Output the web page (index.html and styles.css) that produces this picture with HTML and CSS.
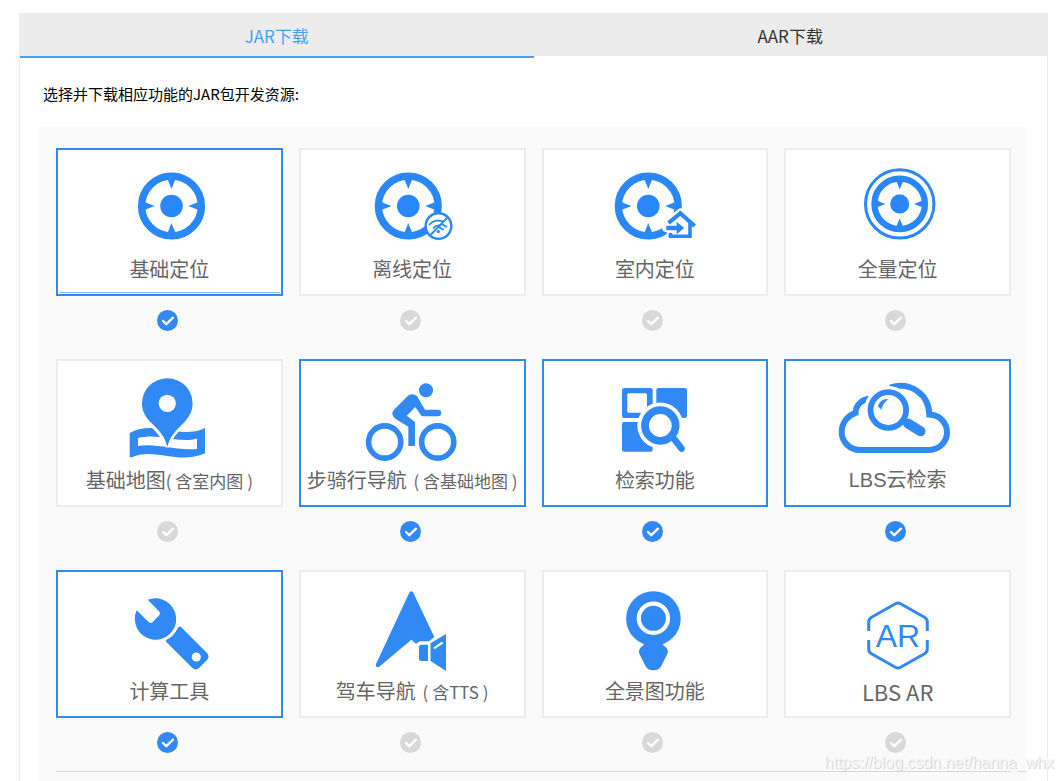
FILE: index.html
```html
<!DOCTYPE html>
<html lang="zh-CN">
<head>
<meta charset="utf-8">
<meta name="viewport" content="width=device-width, initial-scale=1">
<title>JAR下载</title>
<link rel="stylesheet" href="styles.css">
</head>
<body>
<svg class="defs" aria-hidden="true">
  <defs>
    <g id="target">
      <circle r="29.9" fill="none" stroke="currentColor" stroke-width="7.4"/>
      <circle r="11.3" fill="currentColor"/>
      <path fill="currentColor" d="M-4-27H4L0-16.9ZM-4 27H4L0 16.9ZM-27-4V4L-16.9 0ZM27-4V4L16.9 0Z"/>
    </g>
  </defs>
</svg>
<main class="download">
  <div class="tabs" role="tablist">
    <button class="tab tab-active" type="button" role="tab" aria-selected="true">JAR下载</button>
    <button class="tab" type="button" role="tab" aria-selected="false">AAR下载</button>
  </div>
  <p class="intro">选择并下载相应功能的JAR包开发资源:</p>
  <form class="panel">
    <div class="grid">
      <label class="item">
        <span class="card card-lined">
          <svg class="art art-bright" viewBox="0 0 121 100" aria-hidden="true"><use href="#target" x="62.5" y="49"/></svg>
          <span class="title">基础定位</span>
        </span>
        <input class="check" type="checkbox" checked>
      </label>
      <label class="item">
        <span class="card">
          <svg class="art art-bright" viewBox="0 0 121 100" aria-hidden="true">
            <use href="#target" x="56.3" y="49"/>
            <circle cx="86.5" cy="69" r="12.8" fill="#fff" stroke="currentColor" stroke-width="2.4"/>
            <g fill="none" stroke="currentColor" stroke-width="1.8" stroke-linecap="round">
              <path d="M77.5 67.5C80.5 63.8 86 62.8 90.5 64.3M81.5 71C83.5 68.6 86.5 68 88.5 68.6"/>
              <path d="M78 78.5L95 61M90.5 67.5L94.5 69.8M87.5 70.5L91 72.5"/>
            </g>
            <circle cx="86.4" cy="74.6" r="1.6" fill="currentColor"/>
          </svg>
          <span class="title">离线定位</span>
        </span>
        <input class="check" type="checkbox">
      </label>
      <label class="item">
        <span class="card">
          <svg class="art art-bright" viewBox="0 0 121 100" aria-hidden="true">
            <use href="#target" x="54.3" y="49"/>
            <path d="M73 67L86.3 55.5L101 69M96 66V79.3H76.5V77M72.3 71H86" fill="none" stroke="#fff" stroke-width="8" stroke-linejoin="round" stroke-linecap="round"/>
            <path fill="#fff" d="M77 67L86.3 58L96 67V80H77Z"/>
            <path d="M74.5 66L86.3 56.2L100.6 69" fill="none" stroke="currentColor" stroke-width="4.2"/>
            <path d="M96 66V79.3H76.5V76" fill="none" stroke="currentColor" stroke-width="3.6"/>
            <path fill="currentColor" d="M72.3 68.8H82.7V64.8L90.2 71L82.7 77.2V73.2H72.3Z"/>
          </svg>
          <span class="title">室内定位</span>
        </span>
        <input class="check" type="checkbox">
      </label>
      <label class="item">
        <span class="card">
          <svg class="art art-bright" viewBox="0 0 121 100" aria-hidden="true">
            <circle cx="62.7" cy="46.9" r="34.2" fill="none" stroke="currentColor" stroke-width="3"/>
            <g transform="translate(62.7 46.9) scale(.845)"><use href="#target"/></g>
          </svg>
          <span class="title">全量定位</span>
        </span>
        <input class="check" type="checkbox">
      </label>

      <label class="item">
        <span class="card">
          <svg class="art" viewBox="0 0 121 100" aria-hidden="true">
            <path fill="currentColor" d="M20.7 65C34 58 46 60 58 62S84 66 96 60V85.3C84 91 70 90 58 88S34 84 22 89.5L20.7 89Z"/>
            <path fill="#fff" d="M29 70C38 68 48 68 58 70S80 73 88 70.7V81C76 82 66 80 58 79S38 76 29 78Z"/>
            <path fill="#fff" d="M42.3 59C48 65 55 73 57 79.5H60C62 73 66 67 74 59L60 40Z"/>
            <path fill="currentColor" d="M58.3 79C56.5 70 51 63 43.5 56C36.5 50 33 43 33 35.5A25.3 25.3 0 0 1 83.6 35.5C83.6 43 80 50 73.5 56C66 63 60.5 70 58.3 79Z"/>
            <circle cx="58.3" cy="35.3" r="8.6" fill="#fff"/>
          </svg>
          <span class="title">基础地图<small>( 含室内图 )</small></span>
        </span>
        <input class="check" type="checkbox">
      </label>
      <label class="item">
        <span class="card">
          <svg class="art" viewBox="0 0 121 100" aria-hidden="true">
            <g fill="none" stroke="currentColor" stroke-width="5.6"><circle cx="32.7" cy="74" r="16.1"/><circle cx="85.7" cy="74" r="16.1"/></g>
            <g fill="currentColor">
              <circle cx="74" cy="22.3" r="7"/>
              <path d="M56.3 27.5Q60.7 24.6 65 28L73 41.7H86A3.1 3.1 0 0 1 86 48.2H69.7L63.3 39L54.7 47.7L63 54V78H56.3V58.7L43 50.5Q38 46.5 42 41.8Z"/>
            </g>
          </svg>
          <span class="title title-wide">步骑行导航<small> ( 含基础地图 )</small></span>
        </span>
        <input class="check" type="checkbox" checked>
      </label>
      <label class="item">
        <span class="card">
          <svg class="art" viewBox="0 0 121 100" aria-hidden="true">
            <g fill="currentColor">
              <rect x="28" y="20" width="30.7" height="30" rx="2.3"/>
              <rect x="62.3" y="20" width="30.7" height="30" rx="2.3"/>
              <rect x="28" y="54" width="30.7" height="29.7" rx="2.3"/>
            </g>
            <rect x="33.3" y="25.3" width="19.7" height="19.4" rx="1.5" fill="#fff"/>
            <circle cx="66.3" cy="57.5" r="23" fill="#fff"/>
            <circle cx="66.3" cy="57.5" r="15.3" fill="none" stroke="currentColor" stroke-width="7.8"/>
            <path d="M79 69.5L87.5 80.6" fill="none" stroke="currentColor" stroke-width="6.6" stroke-linecap="round"/>
          </svg>
          <span class="title">检索功能</span>
        </span>
        <input class="check" type="checkbox" checked>
      </label>
      <label class="item">
        <span class="card">
          <svg class="art" viewBox="0 0 121 100" aria-hidden="true">
            <path d="M53 19.7C73 13 92 26 92.3 46.5C103 47 110 55 110 64.5C110 74 102 82 91 82H23C13 82 4.7 74 4.7 64C4.7 55 10.5 47.5 18.6 44.8C18.6 37 25 31 34 30.5" fill="none" stroke="currentColor" stroke-width="6"/>
            <circle cx="51.3" cy="42" r="24" fill="#fff"/>
            <circle cx="51.3" cy="42" r="17.8" fill="none" stroke="currentColor" stroke-width="5.8"/>
            <path d="M71 55.5L83.5 63.3" fill="none" stroke="currentColor" stroke-width="10" stroke-linecap="round"/>
            <path fill="currentColor" d="M41 38.5C42 33.5 46 30.5 51 31C48.5 34 46.5 35 44.5 41.5Z"/>
          </svg>
          <span class="title title-cloud">LBS云检索</span>
        </span>
        <input class="check" type="checkbox" checked>
      </label>

      <label class="item">
        <span class="card">
          <svg class="art" viewBox="0 0 121 100" aria-hidden="true">
            <path fill="currentColor" d="M38.7 20.8A20.7 20.7 0 1 1 27.7 31.3L39.8 43.2Q41.7 44.8 43.5 43.2L50.2 36.2Q51.8 34.2 50.2 32.4Z"/>
            <path fill="currentColor" fill-rule="evenodd" d="M69.3 48.2Q70.8 46.8 72.3 48.2L98 74Q101.2 77.5 98 81L90 89Q86.8 91.8 83.5 89L57.6 63.2Q56.2 61.6 57.8 60.6C63 58 66.5 54 69.3 48.2ZM87.3 73.5a4.5 4.5 0 1 0 .01 0Z"/>
          </svg>
          <span class="title">计算工具</span>
        </span>
        <input class="check" type="checkbox" checked>
      </label>
      <label class="item">
        <span class="card">
          <svg class="art" viewBox="0 0 121 100" aria-hidden="true">
            <g fill="currentColor">
              <path d="M57.4 13.6Q59.3 11 61.2 13.6L82.3 58L77 62.3H68L64 64.7L59.3 60.8L27.3 87.8Q23.2 89 24 85Z"/>
              <path d="M69.5 65.7H76V82H69.5Q67 82 67 79.5V68.2Q67 65.7 69.5 65.7ZM78.5 64.3L94 55V92L78.5 82Z"/>
            </g>
            <path d="M82 69.3L90.7 63.3" stroke="#fff" stroke-width="2.2"/>
          </svg>
          <span class="title title-wide">驾车导航<small> ( 含TTS )</small></span>
        </span>
        <input class="check" type="checkbox">
      </label>
      <label class="item">
        <span class="card">
          <svg class="art" viewBox="0 0 121 100" aria-hidden="true">
            <g fill="currentColor">
              <circle cx="59.4" cy="39.5" r="27.3"/>
              <path d="M48 62C51 63.5 51 65 48.5 67Q43.5 70.5 45.5 75L51.5 87Q53.5 91.2 59.4 91.2T67.3 87L73.3 75Q75.3 70.5 70.3 67C67.8 65 67.8 63.5 70.8 62Z"/>
            </g>
            <circle cx="59.4" cy="39.3" r="14.6" fill="none" stroke="#fff" stroke-width="4.2"/>
          </svg>
          <span class="title">全景图功能</span>
        </span>
        <input class="check" type="checkbox">
      </label>
      <label class="item">
        <span class="card">
          <svg class="art" viewBox="0 0 121 100" aria-hidden="true">
            <path d="M31.7 52V43Q31.7 39.8 34.5 38.2L58.4 24.8Q61 23.3 63.6 24.8L87.5 38.2Q90.3 39.8 90.3 43V52M31.7 61V70Q31.7 73.2 34.5 74.8L58.4 88.2Q61 89.7 63.6 88.2L87.5 74.8Q90.3 73.2 90.3 70V61" fill="none" stroke="currentColor" stroke-width="3"/>
            <text class="art-text" x="61" y="68" text-anchor="middle">AR</text>
          </svg>
          <span class="title title-latin">LBS AR</span>
        </span>
        <input class="check" type="checkbox">
      </label>
    </div>
    <hr class="divider">
  </form>
</main>
<div class="watermark">https://blog.csdn.net/hanna_whx</div>
</body>
</html>
```
FILE: styles.css
```css
* {
  box-sizing: border-box;
}

body {
  margin: 0;
  padding: 13px 16px 0 19px;
  background: #fff;
  color: #000;
  font-family: "Noto Sans CJK SC", sans-serif;
}

.defs {
  position: absolute;
  width: 0;
  height: 0;
}

.download {
  display: flex;
  flex-direction: column;
  min-height: calc(100vh - 13px);
  border: solid #ececec;
  border-width: 0 1px;
}

.tabs {
  display: flex;
  align-items: flex-start;
}

.tab {
  flex: 1;
  padding: 11px 0 8px;
  border: 0;
  background: #ececec;
  color: #333;
  font: inherit;
  font-size: 17px;
  line-height: 24px;
  cursor: pointer;
}

.tab-active {
  border-bottom: 2px solid #44a2f5;
  color: #44a2f5;
}

.intro {
  margin: 0;
  padding: 24px 23px 21px;
  font-size: 15px;
  line-height: 24px;
}

.panel {
  flex: 1;
  margin: 0 21px 0 19px;
  padding: 21px 15px 9px 17px;
  background: #fafafa;
}

.grid {
  display: grid;
  grid-template-columns: repeat(4, 1fr);
  gap: 28px 16px;
}

.item {
  display: flex;
  flex-direction: column;
  align-items: center;
  gap: 14px;
  cursor: pointer;
}

.card {
  display: flex;
  flex-direction: column;
  align-items: center;
  align-self: stretch;
  padding: 7px 0 13px;
  border: 2px solid #ececec;
  background: #fff;
}

.item:has(:checked) .card {
  border-color: #3089f5;
}

.card-lined {
  background: linear-gradient(#8fc0fa, #8fc0fa) center bottom 1px / calc(100% - 2px) 1px no-repeat #fff;
}

.art {
  display: block;
  width: 121px;
  height: 100px;
  color: #3089f5;
}

.art-bright {
  color: #2a87fa;
}

.art-text {
  fill: currentColor;
  font-family: "Liberation Sans", Arial, sans-serif;
  font-size: 32px;
}

.title {
  color: #666;
  font-size: 20px;
  line-height: 24px;
  white-space: pre;
}

.title small {
  font-size: 17px;
  line-height: 1;
}

.title-wide small {
  padding-left: 3px;
}

.title-cloud {
  font-family: "Liberation Sans", "Noto Sans CJK SC", sans-serif;
}

.title-latin {
  font-size: 22px;
}

.check {
  width: 21px;
  height: 21px;
  margin: 0 4px 0 0;
  appearance: none;
  border-radius: 50%;
  background: #d8d8d8 url("data:image/svg+xml,%3Csvg xmlns='http://www.w3.org/2000/svg' viewBox='0 0 21 21'%3E%3Cpath d='M6 11l3.3 3.2L16 7.7' fill='none' stroke='%23fff' stroke-width='2.3' stroke-linecap='round' stroke-linejoin='round'/%3E%3C/svg%3E") center / 21px 21px no-repeat;
  cursor: pointer;
}

.check:checked {
  background-color: #3089f5;
}

.divider {
  height: 1px;
  margin: 18px 0 0;
  border: 0;
  background: #d5d5d5;
}

.watermark {
  position: fixed;
  right: 10px;
  bottom: 8px;
  color: #f4f4f4;
  font-family: "Liberation Sans", Arial, sans-serif;
  font-size: 16px;
  line-height: 20px;
  text-shadow: 1px 1px 1px #d0d0d0;
  pointer-events: none;
}
```
